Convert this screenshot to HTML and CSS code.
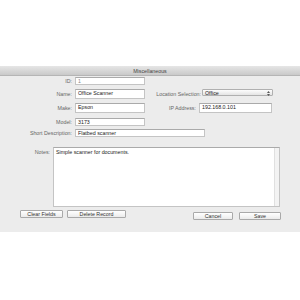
FILE: index.html
```html
<!DOCTYPE html>
<html>
  <head>
    <meta charset="utf-8">
    <title>Miscellaneous</title>
    <link rel="stylesheet" href="styles.css">
  </head>
  <body>
    <div class="window">
      <div class="titlebar">Miscellaneous</div>
      <div class="panel">
        <div class="row row--id">
          <span class="label label--left">ID:</span>
          <span class="field field--short">1</span>
        </div>
        <div class="row row--name">
          <span class="label label--left">Name:</span>
          <span class="field field--short">Office Scanner</span>
          <span class="label label--location">Location Selection:</span>
          <span class="select">Office
            <svg class="select__arrows" width="3" height="5" viewBox="0 0 3 5">
              <path d="M0 2 L1.5 0 L3 2 Z M0 3 L1.5 5 L3 3 Z" fill="#555"/>
            </svg>
          </span>
        </div>
        <div class="row row--make">
          <span class="label label--left">Make:</span>
          <span class="field field--short">Epson</span>
          <span class="label label--ip">IP Address:</span>
          <span class="field field--ip">192.168.0.101</span>
        </div>
        <div class="row row--model">
          <span class="label label--left">Model:</span>
          <span class="field field--short">3173</span>
        </div>
        <div class="row row--desc">
          <span class="label label--left">Short Description:</span>
          <span class="field field--long">Flatbed scanner</span>
        </div>
        <div class="row row--notes">
          <span class="label label--notes">Notes:</span>
          <div class="notes">
            <span class="notes__text">Simple scanner for documents.</span>
            <span class="notes__scroll"></span>
          </div>
        </div>
        <div class="row row--buttons">
          <span class="button button--clear">Clear Fields</span>
          <span class="button button--delete">Delete Record</span>
          <span class="spacer"></span>
          <span class="button button--cancel">Cancel</span>
          <span class="button button--save">Save</span>
        </div>
      </div>
    </div>
  </body>
</html>
```
FILE: styles.css
```css
/* Base */
* {
  box-sizing: border-box;
}

html {
  background: #fff;
}

body {
  margin: 0;
  font-family: "Liberation Sans", "DejaVu Sans", sans-serif;
  font-size: 5.3px;
  color: #444;
}

/* Window */
.window {
  padding-top: 66px;
}

.titlebar {
  height: 10px;
  line-height: 10px;
  text-align: center;
  color: #444;
  background: linear-gradient(#e6e6e6, #c9c9c9);
  border-bottom: 1px solid #b5b5b5;
}

.panel {
  background: #ececec;
  padding: 0 0 12px;
}

/* Rows */
.row {
  display: flex;
  align-items: center;
}

.row--id {
  height: 9px;
  padding-top: 1px;
}

.row--name {
  height: 10px;
  margin-top: 4px;
}

.row--make {
  height: 10px;
  margin-top: 4px;
}

.row--model {
  height: 8px;
  margin-top: 5px;
}

.row--desc {
  height: 8px;
  margin-top: 3px;
}

.row--notes {
  height: 60px;
  margin-top: 10px;
  align-items: flex-start;
}

.row--buttons {
  height: 10px;
  margin-top: 3px;
  padding: 0 19px 0 20px;
}

/* Labels */
.label {
  text-align: right;
  white-space: nowrap;
  color: #666;
}

.label--left {
  width: 72px;
  margin-right: 3px;
}

.label--location {
  width: 56px;
  margin-right: 1px;
}

.label--ip {
  width: 51px;
  margin-right: 3px;
}

.label--notes {
  width: 50px;
  margin-right: 3px;
  padding-top: 2px;
}

/* Fields */
.field {
  display: block;
  height: 100%;
  padding: 0 2px;
  background: #fff;
  border: 1px solid #c4c4c4;
  border-top-color: #aaa;
  color: #222;
  line-height: 7px;
  white-space: nowrap;
}

.field--short {
  width: 70px;
}

.field--long {
  width: 130px;
}

.field--ip {
  width: 73px;
}

.row--id .field {
  color: #888;
}

.select {
  position: relative;
  width: 71px;
  height: 7px;
  align-self: flex-start;
  padding: 0 2px;
  line-height: 6px;
  color: #222;
  background: linear-gradient(#fdfdfd, #e4e4e4);
  border: 1px solid #b0b0b0;
  border-radius: 1px;
}

.select__arrows {
  position: absolute;
  right: 2px;
  top: 0.5px;
}

/* Notes */
.notes {
  display: flex;
  width: 227px;
  height: 60px;
  background: #fff;
  border: 1px solid #c4c4c4;
  border-top-color: #aaa;
}

.notes__text {
  flex: 1;
  padding: 1px 2px;
  color: #222;
}

.notes__scroll {
  width: 5px;
  background: #f3f3f3;
  border-left: 1px solid #e0e0e0;
}

/* Buttons */
.button {
  display: block;
  height: 8px;
  line-height: 6px;
  text-align: center;
  color: #333;
  background: linear-gradient(#ffffff, #ebebeb);
  border: 1px solid #a9a9a9;
  border-radius: 1px;
}

.button--clear {
  width: 43px;
  align-self: flex-start;
}

.button--delete {
  width: 59px;
  margin-left: 4px;
  align-self: flex-start;
}

.button--cancel {
  width: 40px;
  align-self: flex-end;
}

.button--save {
  width: 42px;
  margin-left: 6px;
  align-self: flex-end;
}

.spacer {
  flex: 1;
}
```
